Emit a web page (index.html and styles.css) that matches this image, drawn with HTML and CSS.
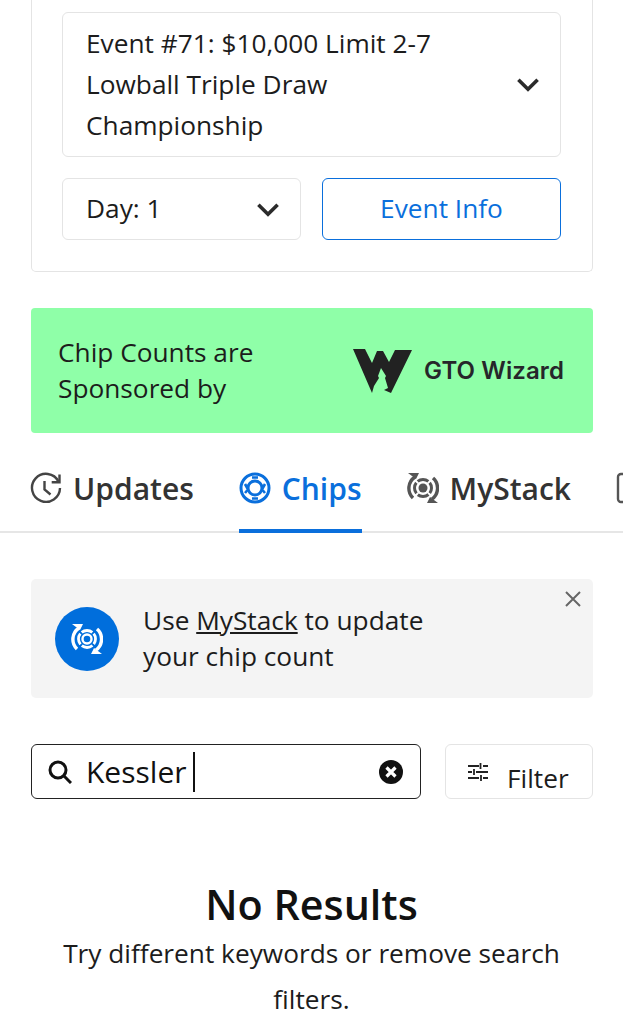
FILE: index.html
```html
<!DOCTYPE html>
<html>
  <head>
    <meta http-equiv="Content-Type" content="text/html; charset=UTF-8"/>
    <meta name="viewport" content="width=device-width, initial-scale=1.0">
    <link rel="stylesheet" href="styles.css">
  </head>
  <body>
    <div class="eventCard">
      <div class="selectBox eventSelect">
        <div class="selectText">Event #71: $10,000 Limit 2-7 Lowball Triple Draw Championship</div>
        <svg class="chevron" viewBox="0 0 20 14"><path d="M2 3l8 8 8-8" /></svg>
      </div>
      <div class="eventRow">
        <div class="selectBox daySelect">
          <div class="selectText">Day: 1</div>
          <svg class="chevron" viewBox="0 0 20 14"><path d="M2 3l8 8 8-8" /></svg>
        </div>
        <button class="infoButton" type="button">Event Info</button>
      </div>
    </div>

    <div class="sponsor">
      <div class="sponsorText">Chip Counts are<br>Sponsored by</div>
      <div class="sponsorLogo">
        <svg class="wizardMark" viewBox="0 0 59 44">
          <path d="M0 0H12L19 14 24 2H30L36 13 42 1H59L38 44 31 41 35 39 32 29 33 27 28 19 25 27 26 29 21 37 19 44Z" />
        </svg>
        <span class="wizardName">GTO Wizard</span>
      </div>
    </div>

    <div class="tabs">
      <div class="tab">
        <svg class="tabIcon" viewBox="0 0 32 32" fill="none" stroke="#444" stroke-width="2.4">
          <path d="M28.5 9.500A14 14 0 1 0 30 16" />
          <path d="M29.500 2.500v7.800h-7.800" />
          <path d="M14.500 9v8.500l6 5" />
        </svg>
        <span>Updates</span>
      </div>
      <div class="tab tabActive">
        <svg class="tabIcon" viewBox="0 0 32 32" fill="none" stroke="#0a6fdc">
          <circle cx="16" cy="16" r="14" stroke-width="3" />
          <circle cx="16" cy="16" r="7" stroke-width="3" />
          <path d="M13 5.500h6M13 26.500h6M6 12l2.500 4.500M26 12l-2.500 4.500M6 21l2.500-3M26 21l-2.500-3" stroke-width="2.600" />
        </svg>
        <span>Chips</span>
      </div>
      <div class="tab">
        <svg class="tabIcon" viewBox="0 0 32 32" fill="none" stroke="#555">
          <circle cx="16" cy="16" r="4.500" fill="#555" stroke="none" />
          <circle cx="16" cy="16" r="8.500" stroke-width="3" stroke-dasharray="11.500 1.850" stroke-dashoffset="6" />
          <path d="M6 26A13.500 13.500 0 0 1 8 5M26 6a13.500 13.500 0 0 1-1 21" stroke-width="3.400" />
          <path d="M1 1h11l-3 6zM31 31H20l3-6z" fill="#555" stroke="none" />
        </svg>
        <span>MyStack</span>
      </div>
      <div class="tab">
        <svg class="tabIcon" viewBox="0 0 32 32" fill="none" stroke="#555" stroke-width="2.400">
          <rect x="2" y="2" width="28" height="28" rx="3" />
        </svg>
      </div>
    </div>

    <div class="notice">
      <div class="noticeBadge">
        <svg viewBox="0 0 32 32" fill="none" stroke="#fff">
          <circle cx="16" cy="16" r="4.500" stroke-width="2.400" />
          <circle cx="16" cy="16" r="8.500" stroke-width="2.800" stroke-dasharray="11.500 1.850" stroke-dashoffset="6" />
          <path d="M6 26A13.500 13.500 0 0 1 8 5M26 6a13.500 13.500 0 0 1-1 21" stroke-width="3.400" />
          <path d="M1 1h11l-3 6zM31 31H20l3-6z" fill="#fff" stroke="none" />
        </svg>
      </div>
      <div class="noticeText">Use <u>MyStack</u> to update<br>your chip count</div>
      <svg class="noticeClose" viewBox="0 0 18 18"><path d="M2 2l14 14M16 2L2 16" /></svg>
    </div>

    <div class="searchRow">
      <div class="searchBox">
        <svg class="searchIcon" viewBox="0 0 24 24" fill="none" stroke="#111" stroke-width="3">
          <circle cx="10" cy="10" r="8" />
          <path d="M16 16l7 7" />
        </svg>
        <span class="searchValue">Kessler</span>
        <span class="caret"></span>
        <svg class="searchClear" viewBox="0 0 24 24">
          <circle cx="12" cy="12" r="12" fill="#111" />
          <path d="M7.500 7.500l9 9M16.500 7.500l-9 9" stroke="#fff" stroke-width="3.200" />
        </svg>
      </div>
      <button class="filterButton" type="button">
        <svg class="filterIcon" viewBox="0 0 20 18" fill="none" stroke="#222" stroke-width="1.800">
          <path d="M0 3h11M15 3h5M12.500 0v6M0 9h4M8 9h12M6 6v6M0 15h11M15 15h5M13 12v6" />
        </svg>
        <span class="filterLabel">Filter</span>
      </button>
    </div>

    <div class="empty">
      <div class="emptyTitle">No Results</div>
      <div class="emptyText">Try different keywords or remove search filters.</div>
    </div>
  </body>
</html>
```

FILE: styles.css
```css
html {
  font-family: "Open Sans", "Noto Sans", sans-serif;
  width: 100%;
  height: 100%;
  margin: 0;
  padding: 0;
  overflow: hidden;
}
body {
  width: 623px;
  height: 1024px;
  margin: 0;
  padding: 0;
  overflow: hidden;
  background: #fff;
  color: #1c1c1c;
}

.eventCard {
  box-sizing: border-box;
  height: 272px;
  margin: 0 30px 0 31px;
  padding: 12px 31px 0 30px;
  border: 1px solid #e4e4e4;
  border-top: none;
  border-radius: 0 0 5px 5px;
}
.selectBox {
  box-sizing: border-box;
  display: flex;
  align-items: center;
  justify-content: space-between;
  border: 1px solid #e4e4e4;
  border-radius: 6px;
  background: #fff;
}
.eventSelect {
  height: 145px;
  padding: 0 20px 0 23px;
}
.selectText {
  font-size: 26.25px;
  line-height: 41px;
  width: 380px;
}
.chevron {
  flex: none;
  width: 24px;
  height: 17px;
  fill: none;
  stroke: #2b2b2b;
  stroke-width: 3;
}
.eventRow {
  display: flex;
  gap: 21px;
  margin-top: 21px;
}
.daySelect {
  width: 239px;
  height: 62px;
  padding: 0 20px 0 23px;
}
.daySelect .selectText {
  width: auto;
  margin-top: -2px;
}
.infoButton {
  width: 239px;
  height: 62px;
  padding: 0 0 2px;
  border: 1px solid #0a6fdc;
  border-radius: 6px;
  background: #fff;
  color: #0a6fdc;
  font-family: inherit;
  font-size: 26.25px;
}

.sponsor {
  box-sizing: border-box;
  display: flex;
  align-items: center;
  justify-content: space-between;
  height: 125px;
  margin: 36px 30px 0 31px;
  padding: 0 29px 0 27px;
  border-radius: 4px;
  background: #8fffa8;
}
.sponsorText {
  font-size: 26.25px;
  line-height: 36px;
  margin-top: -2px;
}
.sponsorLogo {
  display: flex;
  align-items: center;
  gap: 12px;
}
.wizardMark {
  width: 59px;
  height: 44px;
  fill: #222;
}
.wizardName {
  font-family: Inter, sans-serif;
  font-size: 24px;
  font-weight: 600;
  letter-spacing: 0.1px;
  color: #26262a;
  white-space: nowrap;
}

.tabs {
  display: flex;
  gap: 45px;
  height: 100px;
  padding-left: 30px;
  box-shadow: inset 0 -2px #e6e6e6;
  white-space: nowrap;
  overflow: hidden;
}
.tab {
  box-sizing: border-box;
  display: flex;
  align-items: center;
  gap: 11px;
  height: 100px;
  padding-top: 14px;
  border-bottom: 4px solid transparent;
  color: #333;
  font-size: 30px;
  font-weight: 600;
}
.tabIcon {
  flex: none;
  width: 32px;
  height: 32px;
}
.tabActive {
  color: #0a6fdc;
  border-bottom-color: #0a6fdc;
}

.notice {
  box-sizing: border-box;
  position: relative;
  display: flex;
  align-items: center;
  gap: 24px;
  height: 119px;
  margin: 46px 30px 0 31px;
  padding: 0 24px;
  border-radius: 5px;
  background: #f4f4f4;
}
.noticeBadge {
  display: flex;
  align-items: center;
  justify-content: center;
  width: 64px;
  height: 64px;
  border-radius: 50%;
  background: #006edc;
}
.noticeBadge svg {
  width: 32px;
  height: 32px;
}
.noticeText {
  font-size: 26.25px;
  line-height: 36px;
  margin-top: -2px;
}
.noticeClose {
  position: absolute;
  top: 11px;
  right: 11px;
  width: 18px;
  height: 18px;
  fill: none;
  stroke: #666;
  stroke-width: 2;
}

.searchRow {
  display: flex;
  gap: 24px;
  margin: 46px 30px 0 31px;
}
.searchBox {
  box-sizing: border-box;
  display: flex;
  align-items: center;
  width: 390px;
  height: 55px;
  padding: 0 17px 0 16px;
  border: 1px solid #222;
  border-radius: 6px;
}
.searchIcon {
  flex: none;
  width: 24px;
  height: 24px;
}
.searchValue {
  margin-left: 14px;
  font-size: 30px;
  color: #111;
}
.caret {
  width: 2px;
  height: 40px;
  margin-left: 6px;
  background: #111;
}
.searchClear {
  flex: none;
  width: 24px;
  height: 24px;
  margin-left: auto;
}
.filterButton {
  box-sizing: border-box;
  display: flex;
  align-items: center;
  gap: 19px;
  width: 148px;
  height: 55px;
  padding: 0 22px;
  border: 1px solid #e4e4e4;
  border-radius: 6px;
  background: #fff;
  color: #1c1c1c;
  font-family: inherit;
  font-size: 26.25px;
}
.filterIcon {
  flex: none;
  width: 20px;
  height: 18px;
}
.filterLabel {
  margin-top: 12px;
}

.empty {
  margin: 79px 50px 0;
  text-align: center;
}
.emptyTitle {
  font-size: 41.25px;
  line-height: 52px;
  font-weight: 600;
  color: #111;
}
.emptyText {
  font-size: 26.25px;
  line-height: 46px;
}
```
